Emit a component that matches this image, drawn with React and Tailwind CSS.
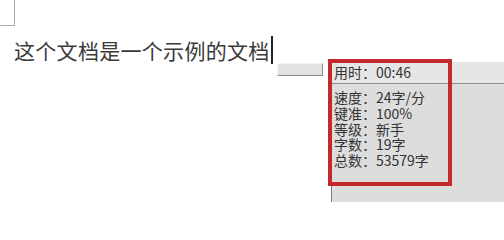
export default function App() {
  const stats = [
    ["速度：", "24字/分"],
    ["键准：", "100%"],
    ["等级：", "新手"],
    ["字数：", "19字"],
    ["总数：", "53579字"],
  ];

  return (
    <div
      className="relative w-[504px] h-[202px] bg-white overflow-hidden text-[#333]"
      style={{ fontFamily: '"Noto Sans CJK SC", "Liberation Sans", sans-serif' }}
    >
      {/* page corner mark */}
      <div className="absolute left-0 top-0 w-[15px] h-[26px] border-r border-b border-[#a8a8a8]" />

      {/* document line */}
      <div className="flex items-center pt-[36px] pl-[14px]">
        <span className="text-[21px] leading-[28px] tracking-[0.3px] text-[#3a3a3a]">
          这个文档是一个示例的文档
        </span>
        <span className="w-[2px] h-[28px] bg-[#222] ml-[1px]" />
      </div>

      {/* small button */}
      <div className="absolute left-[277px] top-[63px] w-[46px] h-[13px] bg-[#e2e2e2] border border-t-[#f4f4f4] border-l-[#f4f4f4] border-r-[#8c8c8c] border-b-[#8c8c8c]" />

      {/* typing stats panel */}
      <div className="absolute left-[331px] top-[62px] right-0 bottom-0 bg-[#dddddd] border-l border-[#7a7a7a] flex flex-col">
        <div className="h-[22px] bg-[#e6e6e6] border-b border-[#8e8e8e] flex items-center pl-[2px] text-[14px]">
          用时：00:46
        </div>
        <div className="flex flex-col pt-[6px] pl-[2px] text-[14px] leading-[15.8px]">
          {stats.map(([k, v]) => (
            <div key={k} className="flex h-[15.8px]">
              <span>{k}</span>
              <span>{v}</span>
            </div>
          ))}
        </div>
      </div>

      {/* red annotation box */}
      <div className="absolute left-[328px] top-[59px] w-[124px] h-[127px] border-[4px] border-[#c4272c]" />
    </div>
  );
}
